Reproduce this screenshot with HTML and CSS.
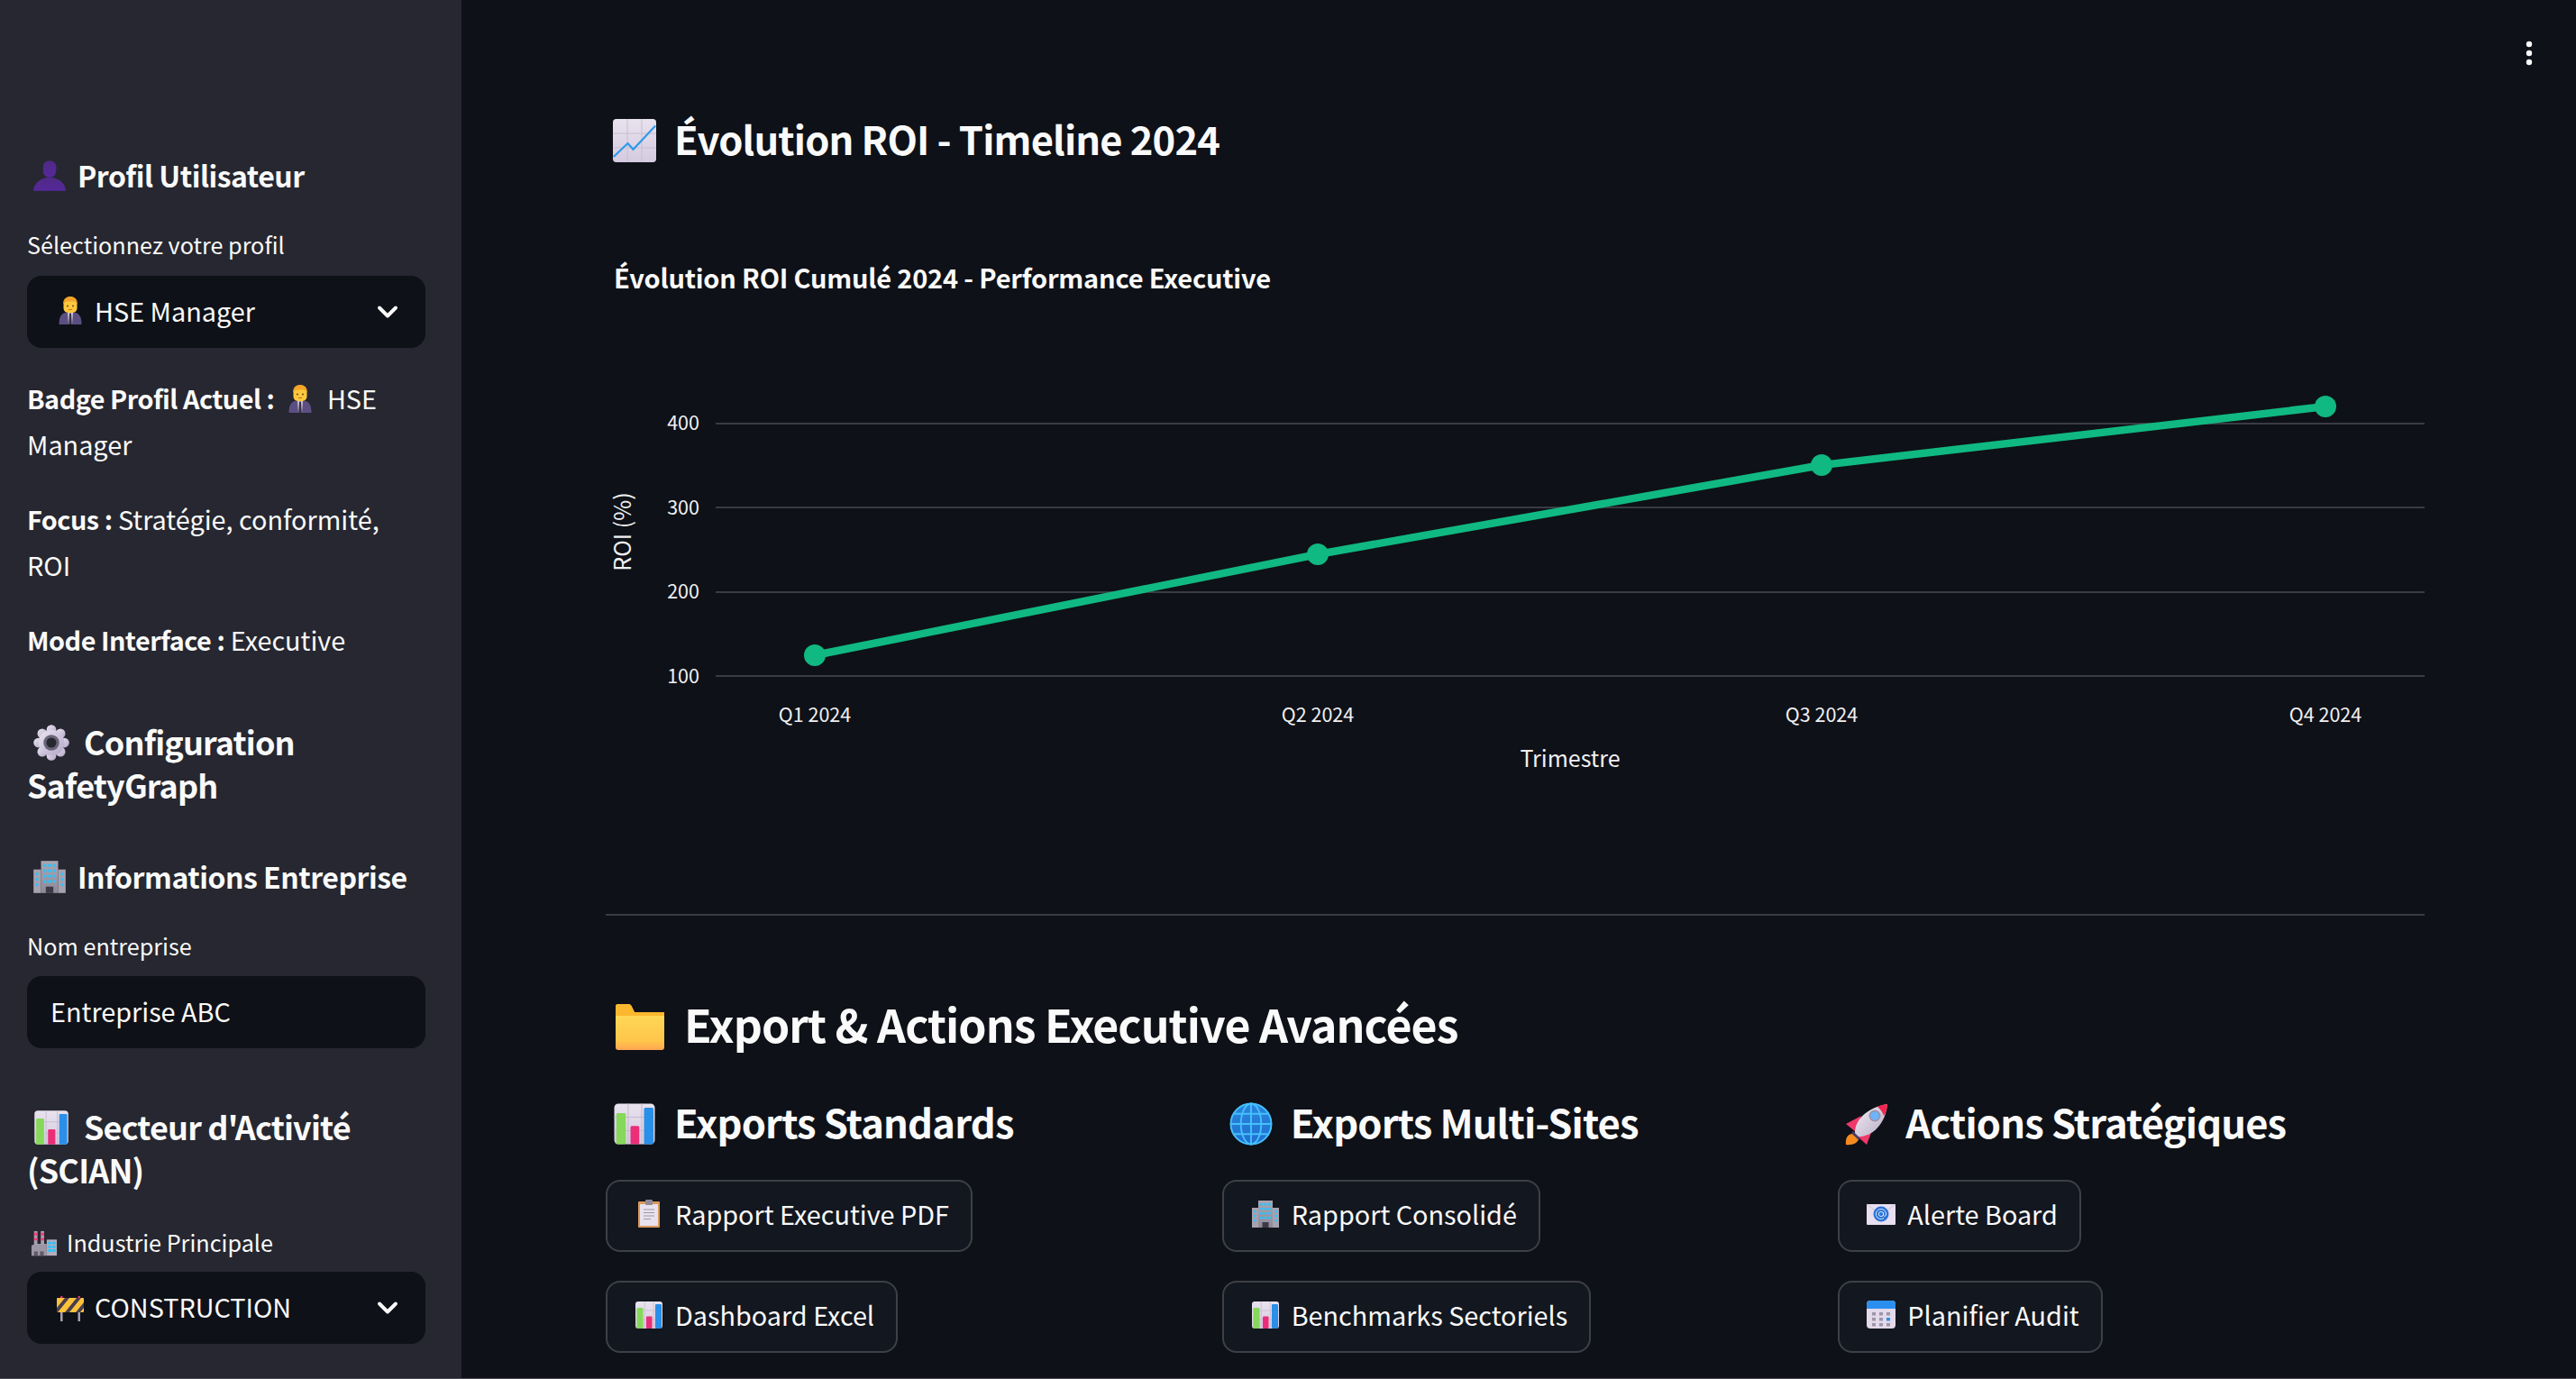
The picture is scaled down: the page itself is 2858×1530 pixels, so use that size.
FILE: index.html
```html
<!DOCTYPE html>
<html lang="fr">
<head>
<meta charset="utf-8">
<title>SafetyGraph</title>
<link rel="stylesheet" href="styles.css">
</head>
<body>
<svg class="defs" width="0" height="0" aria-hidden="true">
  <defs>
    <linearGradient id="gBust" x1="0" y1="0" x2="0" y2="1"><stop offset="0" stop-color="#4f2a85"/><stop offset="1" stop-color="#55289a"/></linearGradient>
    <linearGradient id="gFolder" x1="0" y1="0" x2="0" y2="1"><stop offset="0" stop-color="#ffdf5e"/><stop offset=".8" stop-color="#ffc64a"/><stop offset="1" stop-color="#ffa552"/></linearGradient>
    <linearGradient id="gPanel" x1="0" y1="0" x2="0" y2="1"><stop offset="0" stop-color="#e8e2ee"/><stop offset="1" stop-color="#d5cbe0"/></linearGradient>
    <linearGradient id="gGear" x1="0" y1="0" x2="1" y2="1"><stop offset="0" stop-color="#ebe6f2"/><stop offset="1" stop-color="#b4a6c8"/></linearGradient>
    <linearGradient id="gBuild" x1="0" y1="0" x2="0" y2="1"><stop offset="0" stop-color="#aaa5b2"/><stop offset="1" stop-color="#8f8a98"/></linearGradient>
    <linearGradient id="gRocket" x1="0" y1="0" x2="1" y2="1"><stop offset="0" stop-color="#f4eef4"/><stop offset="1" stop-color="#b6aac4"/></linearGradient>
    <linearGradient id="gGlobe" x1="0" y1="0" x2="0" y2="1"><stop offset="0" stop-color="#2a86dc"/><stop offset="1" stop-color="#1f6fd0"/></linearGradient>

    <symbol id="e-bust" viewBox="0 0 32 32">
      <path d="M10 7.500C10 3.500 12.600 2 16 2s6 1.500 6 5.500V12c0 3-2.500 5.500-6 5.500S10 15 10 12z" fill="url(#gBust)"/>
      <path d="M1 30c0-7 7-12.500 15-12.500S31 23 31 30z" fill="url(#gBust)"/>
      <rect x="22" y="7" width="1.500" height="4" rx=".7" fill="#3b2168"/>
    </symbol>

    <symbol id="e-man" viewBox="0 0 32 32">
      <path d="M3.500 31c0-9 2.500-14 12.500-14s12.500 5 12.500 14z" fill="#5b4f82"/>
      <path d="M13 16.500h6l-1 14.500h-4z" fill="#d8d2e2"/>
      <path d="M15 18.500h2l.8 12.500h-3.600z" fill="#3a3048"/>
      <rect x="8.500" y="4" width="15" height="14" rx="5" fill="#ffc83d"/>
      <path d="M8 9C8 2.500 11.500 0 16 0s8 2.500 8 9l-2-3.500H10z" fill="#f3a52a"/>
      <circle cx="13" cy="10.500" r=".9" fill="#5a3a20"/><circle cx="19" cy="10.500" r=".9" fill="#5a3a20"/>
      <rect x="14" y="14" width="4" height=".9" fill="#c9631e"/>
    </symbol>

    <symbol id="e-gear" viewBox="0 0 32 32">
      <g fill="url(#gGear)">
        <circle cx="16" cy="4.500" r="4.300"/><circle cx="16" cy="27.500" r="4.300"/>
        <circle cx="4.500" cy="16" r="4.300"/><circle cx="27.500" cy="16" r="4.300"/>
        <circle cx="7.900" cy="7.900" r="4.300"/><circle cx="24.100" cy="7.900" r="4.300"/>
        <circle cx="7.900" cy="24.100" r="4.300"/><circle cx="24.100" cy="24.100" r="4.300"/>
        <circle cx="16" cy="16" r="11.500"/>
      </g>
      <circle cx="16" cy="16" r="7" fill="#6a6478"/>
      <circle cx="16" cy="16" r="4.400" fill="#262730"/>
    </symbol>

    <symbol id="e-office" viewBox="0 0 32 32">
      <rect x="8" y="1" width="16" height="30" fill="url(#gBuild)"/>
      <rect x="1" y="9" width="7" height="22" fill="#a7a1b0"/><rect x="24" y="9" width="7" height="22" fill="#a7a1b0"/>
      <g fill="#35c0f5">
        <rect x="10" y="4" width="3" height="2.400"/><rect x="14.500" y="4" width="3" height="2.400"/><rect x="19" y="4" width="3" height="2.400"/>
        <rect x="10" y="9" width="3" height="2.400"/><rect x="14.500" y="9" width="3" height="2.400"/><rect x="19" y="9" width="3" height="2.400"/>
        <rect x="10" y="14" width="3" height="2.400"/><rect x="14.500" y="14" width="3" height="2.400"/><rect x="19" y="14" width="3" height="2.400"/>
        <rect x="10" y="19" width="3" height="2.400"/><rect x="14.500" y="19" width="3" height="2.400"/><rect x="19" y="19" width="3" height="2.400"/>
        <rect x="3" y="12" width="2.500" height="2.400"/><rect x="3" y="17" width="2.500" height="2.400"/><rect x="3" y="22" width="2.500" height="2.400"/>
        <rect x="26.500" y="12" width="2.500" height="2.400"/><rect x="26.500" y="17" width="2.500" height="2.400"/><rect x="26.500" y="22" width="2.500" height="2.400"/>
      </g>
      <rect x="12.500" y="25" width="7" height="6" fill="#3d3a48"/>
    </symbol>

    <symbol id="e-bars" viewBox="0 0 32 32">
      <rect x="1" y="1" width="30" height="30" rx="3" fill="url(#gPanel)"/>
      <path d="M11.300 1v30M21.300 1v30M1 11h30M1 21h30" stroke="#c4bacd" stroke-width=".7"/>
      <rect x="2.500" y="8" width="7" height="23" rx="1" fill="#86d85a"/>
      <rect x="13" y="17.500" width="6.500" height="13.500" rx="1" fill="#ea2f78"/>
      <rect x="23" y="4" width="7" height="27" rx="1" fill="#2a8fe8"/>
    </symbol>

    <symbol id="e-factory" viewBox="0 0 32 32">
      <path d="M1 30V18l4-2h14v14z" fill="#9c96a6"/>
      <rect x="4" y="1" width="4" height="16" fill="#a7a1b0"/><rect x="12" y="1" width="4" height="16" fill="#a7a1b0"/>
      <path d="M4 3h4v3H4zM4 9h4v3H4zM12 3h4v3h-4zM12 9h4v3h-4z" fill="#ef3e7e"/>
      <rect x="19" y="11" width="12" height="19" fill="#b3adbc"/>
      <path d="M20.500 13.500h4v3h-4zM25.500 13.500h4v3h-4zM20.500 18h4v3h-4zM25.500 18h4v3h-4zM20.500 22.500h4v3h-4zM25.500 22.500h4v3h-4z" fill="#35c0f5"/>
      <rect x="4" y="25" width="4.500" height="5" fill="#5f5a68"/><rect x="11" y="25" width="4.500" height="5" fill="#5f5a68"/>
    </symbol>

    <symbol id="e-barrier" viewBox="0 0 32 32">
      <rect x="5" y="22" width="2.500" height="10" fill="#a79fb4"/><rect x="24.500" y="22" width="2.500" height="10" fill="#a79fb4"/>
      <rect x="5" y="4" width="2.500" height="2.500" fill="#e0307a"/><rect x="24.500" y="4" width="2.500" height="2.500" fill="#e0307a"/>
      <rect x="1" y="6" width="30" height="16" rx="1" fill="#ffc33a"/>
      <path d="M1 17L10 6h5L2 22H1zM10 22L23 6h5L15 22zM22 22L31 11v6l-4 5z" fill="#4a3d4e"/>
    </symbol>

    <symbol id="e-trend" viewBox="0 0 32 32">
      <rect x="0" y="0" width="32" height="32" rx="2.500" fill="url(#gPanel)"/>
      <path d="M10.700 0v32M21.300 0v32M0 10.700h32M0 21.300h32" stroke="#c6bbd0" stroke-width=".6"/>
      <path d="M.500 28L11 18l4 4.500L31.500 5" fill="none" stroke="#2e9be8" stroke-width="1.500"/>
    </symbol>

    <symbol id="e-folder" viewBox="0 0 56 52">
      <path d="M1 4a3 3 0 0 1 3-3h11c2 0 3 1 4 3l3 6h30a3 3 0 0 1 3 3v36a3 3 0 0 1-3 3H4a3 3 0 0 1-3-3z" fill="url(#gFolder)"/>
      <path d="M1 4a3 3 0 0 1 3-3h11c2 0 3 1 4 3l3 6h33v4H1z" fill="#fbb72e"/>
    </symbol>

    <symbol id="e-globe" viewBox="0 0 32 32">
      <circle cx="16" cy="16" r="15.500" fill="url(#gGlobe)"/>
      <g fill="none" stroke="#45c0fb" stroke-width="1.300">
        <circle cx="16" cy="16" r="15"/>
        <ellipse cx="16" cy="16" rx="7.500" ry="15"/>
        <path d="M16 1v30M1 16h30M3.500 8.500h25M3.500 23.500h25"/>
      </g>
    </symbol>

    <symbol id="e-rocket" viewBox="0 0 48 48">
      <path d="M1 47C0 40 3 35 8 35l7 6c-1 4-7 7-14 6z" fill="#f58a1f"/>
      <path d="M18 15L1 24l11 9zM32 26L24 47 14 38z" fill="#f0386b"/>
      <path d="M11 38C9 20 24 6 47 2 45 24 30 40 11 38z" fill="url(#gRocket)"/>
      <path d="M36 5c4-2 8-2.500 11-3 0 5-2 10-4 13-2-6-5-8-7-10z" fill="#f4264f"/>
      <circle cx="33" cy="15" r="6.500" fill="#9a94a8"/>
      <circle cx="33" cy="15" r="4.800" fill="#6fb4f8"/>
      <path d="M8 33l8 8" stroke="#4a3a68" stroke-width="2.500"/>
    </symbol>

    <symbol id="e-clip" viewBox="0 0 32 32">
      <rect x="4" y="2" width="24" height="29" rx="1" fill="#d99a5c"/>
      <rect x="6" y="5" width="20" height="24" fill="#e8e2ee"/>
      <rect x="12" y="0" width="8" height="6" rx="1" fill="#8f8a98"/>
      <path d="M10 11h12M10 14.500h12M10 18h12M10 21.500h8" stroke="#9d96a8" stroke-width="1"/>
    </symbol>

    <symbol id="e-mail" viewBox="0 0 32 32">
      <rect x="0" y="5" width="32" height="23" rx="1" fill="#e8dff0"/>
      <path d="M0 5l16 12L32 5" stroke="#cdc2d8" stroke-width="1" fill="none"/>
      <circle cx="16" cy="16" r="8.500" fill="#2c74d8"/>
      <circle cx="16" cy="16" r="2.600" fill="none" stroke="#d5e6fb" stroke-width="1"/>
      <path d="M18.600 14v3c0 2 3 2 3-1 0-3-2.500-5.500-5.600-5.500a5.500 5.500 0 1 0 3 10" fill="none" stroke="#d5e6fb" stroke-width="1"/>
    </symbol>

    <symbol id="e-cal" viewBox="0 0 32 32">
      <rect x="0" y="0" width="32" height="31" rx="4" fill="#e2d9ea"/>
      <path d="M0 9V4a4 4 0 0 1 4-4h24a4 4 0 0 1 4 4v5z" fill="#2b8ff0"/>
      <path d="M6 13h4v3.500H6zM14 13h4v3.500h-4zM22 13h4v3.500h-4zM6 19h4v3.500H6zM14 19h4v3.500h-4zM6 25h4v3.500H6zM14 25h4v3.500h-4zM22 25h4v3.500h-4z" fill="#9d96a8"/>
      <rect x="22" y="19" width="4" height="3.500" fill="#2b8ff0"/>
    </symbol>
  </defs>
</svg>

<div class="app">
  <aside class="sidebar">
    <h3 class="side-head head-profil"><svg class="em em-head"><use href="#e-bust"/></svg>Profil Utilisateur</h3>
    <div class="label label-profil">Sélectionnez votre profil</div>
    <div class="select">
      <svg class="em em-sel"><use href="#e-man"/></svg><span>HSE Manager</span>
      <svg class="chev" viewBox="0 0 24 24"><path d="M6 9l6 6 6-6" fill="none" stroke="#fafafa" stroke-width="2.600" stroke-linecap="round" stroke-linejoin="round"/></svg>
    </div>
    <p class="side-p p-badge"><b>Badge Profil Actuel :</b> <svg class="em em-inline"><use href="#e-man"/></svg>HSE Manager</p>
    <p class="side-p p-focus"><b>Focus :</b> Stratégie, conformité, ROI</p>
    <p class="side-p p-mode"><b>Mode Interface :</b> Executive</p>
    <h3 class="side-head big head-config"><svg class="em em-big"><use href="#e-gear"/></svg>Configuration SafetyGraph</h3>
    <h3 class="side-head head-info"><svg class="em em-head"><use href="#e-office"/></svg>Informations Entreprise</h3>
    <div class="label label-nom">Nom entreprise</div>
    <div class="select input">Entreprise ABC</div>
    <h3 class="side-head big head-sect"><svg class="em em-big"><use href="#e-bars"/></svg>Secteur d'Activité (SCIAN)</h3>
    <div class="label label-ind"><svg class="em em-label"><use href="#e-factory"/></svg>Industrie Principale</div>
    <div class="select">
      <svg class="em em-sel"><use href="#e-barrier"/></svg><span>CONSTRUCTION</span>
      <svg class="chev" viewBox="0 0 24 24"><path d="M6 9l6 6 6-6" fill="none" stroke="#fafafa" stroke-width="2.600" stroke-linecap="round" stroke-linejoin="round"/></svg>
    </div>
  </aside>

  <main class="main">
    <svg class="menu" width="12" height="32" viewBox="0 0 12 32"><circle cx="6" cy="4" r="3.200"/><circle cx="6" cy="14" r="3.200"/><circle cx="6" cy="24" r="3.200"/></svg>

    <h3 class="main-h3 first"><svg class="em em-h3"><use href="#e-trend"/></svg>Évolution ROI - Timeline 2024</h3>

    <svg class="chart" width="2018" height="720" viewBox="672 220 2018 720">
      <text class="c-title" x="681" y="320">Évolution ROI Cumulé 2024 - Performance Executive</text>
      <g class="grid">
        <line x1="794" x2="2690" y1="470" y2="470"/>
        <line x1="794" x2="2690" y1="563" y2="563"/>
        <line x1="794" x2="2690" y1="657" y2="657"/>
        <line x1="794" x2="2690" y1="750" y2="750"/>
      </g>
      <g class="ytick">
        <text x="776" y="477">400</text>
        <text x="776" y="571">300</text>
        <text x="776" y="664">200</text>
        <text x="776" y="758">100</text>
      </g>
      <g class="xtick">
        <text x="904" y="801">Q1 2024</text>
        <text x="1462" y="801">Q2 2024</text>
        <text x="2021" y="801">Q3 2024</text>
        <text x="2580" y="801">Q4 2024</text>
      </g>
      <text class="ax" x="1742" y="851">Trimestre</text>
      <text class="ax" transform="translate(700 590) rotate(-90)">ROI (%)</text>
      <polyline class="trace" points="904,727 1462,615 2021,516 2580,451"/>
      <g class="pts">
        <circle cx="904" cy="727" r="12"/><circle cx="1462" cy="615" r="12"/><circle cx="2021" cy="516" r="12"/><circle cx="2580" cy="451" r="12"/>
      </g>
    </svg>

    <hr class="rule">

    <h2 class="main-h2"><svg class="em em-h2"><use href="#e-folder"/></svg>Export &amp; Actions Executive Avancées</h2>

    <div class="cols">
      <section class="col">
        <h3 class="main-h3"><svg class="em em-h3"><use href="#e-bars"/></svg>Exports Standards</h3>
        <div class="btn"><svg class="em em-btn"><use href="#e-clip"/></svg>Rapport Executive PDF</div>
        <div class="btn"><svg class="em em-btn"><use href="#e-bars"/></svg>Dashboard Excel</div>
      </section>
      <section class="col">
        <h3 class="main-h3"><svg class="em em-h3"><use href="#e-globe"/></svg>Exports Multi-Sites</h3>
        <div class="btn"><svg class="em em-btn"><use href="#e-office"/></svg>Rapport Consolidé</div>
        <div class="btn"><svg class="em em-btn"><use href="#e-bars"/></svg>Benchmarks Sectoriels</div>
      </section>
      <section class="col">
        <h3 class="main-h3 tight"><svg class="em em-h3"><use href="#e-rocket"/></svg>Actions Stratégiques</h3>
        <div class="btn"><svg class="em em-btn"><use href="#e-mail"/></svg>Alerte Board</div>
        <div class="btn"><svg class="em em-btn"><use href="#e-cal"/></svg>Planifier Audit</div>
      </section>
    </div>
  </main>
</div>
</body>
</html>
```
FILE: styles.css
```css
* { box-sizing: border-box; }
html, body { margin: 0; height: 100%; overflow: hidden; }
body {
  background: #0e1117;
  color: #fafafa;
  font-family: "Noto Sans CJK SC", "Noto Sans", sans-serif;
}
.defs { position: absolute; }
.app { display: flex; width: 2858px; height: 1530px; overflow: hidden; position: relative; }
.app::after {
  content: "";
  position: absolute;
  left: 0;
  right: 0;
  bottom: 0;
  height: 1px;
  background: #4a4a55;
}

.em { display: inline-block; flex: none; }

/* Sidebar */
.sidebar {
  width: 512px;
  flex: none;
  background: #262730;
  padding: 0 40px 0 30px;
  height: 1530px;
  overflow: hidden;
}
.side-head {
  margin: 0;
  font-size: 32px;
  line-height: 48px;
  font-weight: 600;
  letter-spacing: -.5px;
}
.side-head.big { font-size: 36px; letter-spacing: -.85px; }
.head-profil { margin-top: 170px; }
.head-config { margin-top: 63px; }
.head-info { margin-top: 54px; }
.head-sect { margin-top: 0; }
.em-head { width: 38px; height: 38px; margin: 0 12px 0 6px; vertical-align: -6px; }
.em-big { width: 40px; height: 40px; margin: 0 16px 0 7px; vertical-align: -6px; }
.label { font-size: 25.200px; line-height: 36px; }
.label-profil { margin: 35px 0 17px; }
.label-nom { margin: 35px 0 16px; }
.label-ind { margin: 39px 0 15px; }
.em-label { width: 30px; height: 30px; margin: 0 10px 0 4px; vertical-align: -6px; }

.select {
  height: 80px;
  border-radius: 16px;
  background: #0e1117;
  display: flex;
  align-items: center;
  padding: 0 0 3px 32px;
  font-size: 28.800px;
  position: relative;
}
.select span { margin-left: 11px; }
.em-sel { width: 32px; height: 32px; }
.chev { position: absolute; right: 24px; top: 22px; width: 36px; height: 36px; }
.input { padding-left: 26px; margin-bottom: 62px; }

.side-p { margin: 0; font-size: 28.800px; line-height: 51px; }
.side-p b { font-weight: 600; letter-spacing: -.5px; }
.p-badge { margin-top: 30px; }
.p-focus { margin-top: 32px; }
.p-mode { margin-top: 32px; }
.em-inline { width: 32px; height: 32px; margin: 0 14px 0 6px; vertical-align: -5px; }

/* Main */
.main {
  flex: 1;
  padding: 0 168px 0 160px;
  position: relative;
  height: 1530px;
  overflow: hidden;
}
.menu { position: absolute; top: 45px; right: 46px; fill: #fafafa; }
.main-h3 {
  margin: 0;
  font-size: 43.500px;
  line-height: 64px;
  font-weight: 600;
  padding-left: 8px;
  letter-spacing: -.85px;
}
.main-h3.first { margin-top: 122px; }
.em-h3 { width: 48px; height: 48px; margin-right: 20px; vertical-align: -8px; }
.tight .em-h3 { margin-right: 19px; }
.chart { display: block; margin-top: 34px; }
.c-title { font-size: 29px; font-weight: 700; fill: #fafafa; letter-spacing: -.2px; }
.grid line { stroke: #3a3b44; stroke-width: 2; }
.ytick text { font-size: 21.500px; fill: #f0f0f2; text-anchor: end; }
.xtick text { font-size: 21.500px; fill: #f0f0f2; text-anchor: middle; }
.ax { font-size: 25px; fill: #f0f0f2; text-anchor: middle; }
.trace { fill: none; stroke: #10b981; stroke-width: 8.500; }
.pts circle { fill: #10b981; }

.rule { height: 2px; border: 0; margin: 74px 0 0; background: #3a3b44; }

.main-h2 {
  margin: 87px 0 0;
  font-size: 50px;
  line-height: 64px;
  font-weight: 600;
  padding-left: 8px;
  letter-spacing: -.95px;
}
.em-h2 { width: 56px; height: 52px; margin: 0 21px 0 2px; vertical-align: -8px; }

.cols { display: flex; gap: 33px; margin-top: 46px; }
.col { flex: 1; min-width: 0; display: flex; flex-direction: column; align-items: flex-start; }
.col .main-h3 { margin-bottom: 32px; }
.btn {
  height: 80px;
  border: 2px solid #3e4048;
  border-radius: 16px;
  background: #13171f;
  display: flex;
  align-items: center;
  padding: 0 24px 5px 30px;
  font-size: 28.800px;
  margin-bottom: 32px;
}
.em-btn { width: 32px; height: 32px; margin-right: 13px; }
```
